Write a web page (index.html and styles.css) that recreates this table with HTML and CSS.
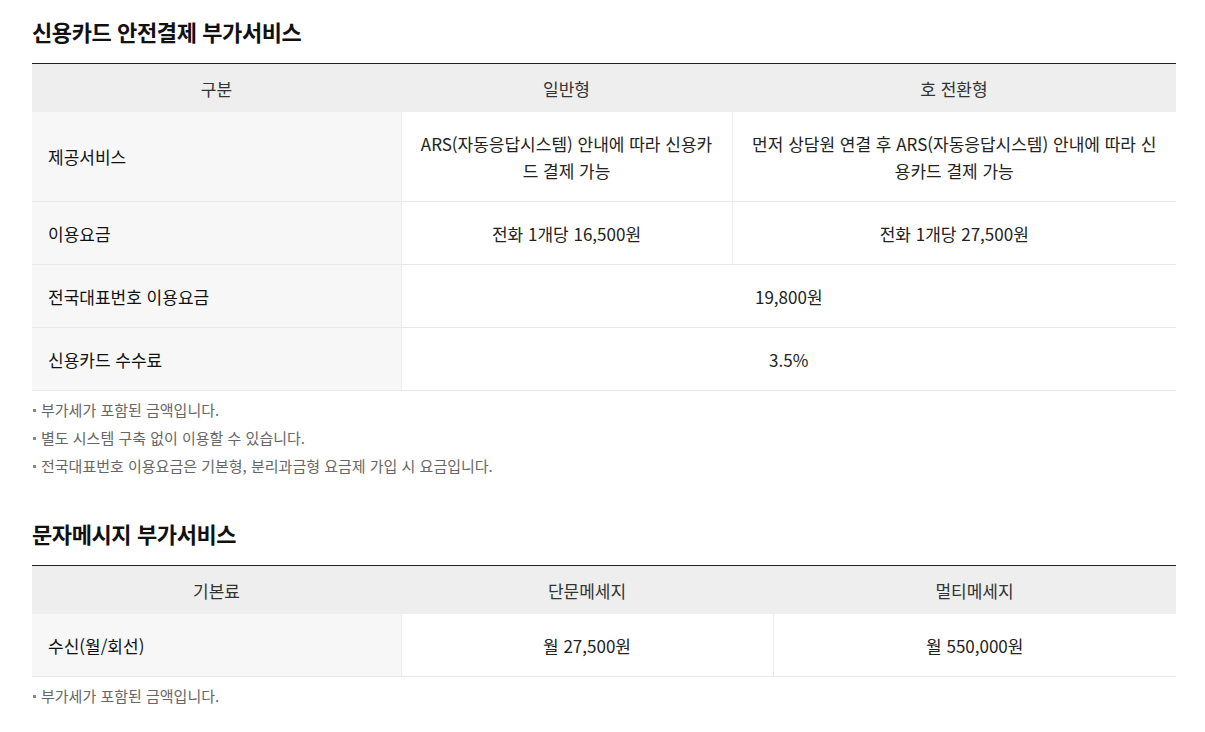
FILE: index.html
```html
<!DOCTYPE html>
<html lang="ko">
<head>
<meta charset="utf-8">
<link rel="stylesheet" href="styles.css">
</head>
<body>
<div class="page">
  <section class="block">
    <h2 class="title">신용카드 안전결제 부가서비스</h2>
    <table class="tbl">
      <colgroup>
        <col class="c-head">
        <col class="c1a">
        <col class="c1b">
      </colgroup>
      <thead>
        <tr><th>구분</th><th>일반형</th><th>호 전환형</th></tr>
      </thead>
      <tbody>
        <tr>
          <th class="rh">제공서비스</th>
          <td>ARS(자동응답시스템) 안내에 따라 신용카<br>드 결제 가능</td>
          <td>먼저 상담원 연결 후 ARS(자동응답시스템) 안내에 따라 신<br>용카드 결제 가능</td>
        </tr>
        <tr>
          <th class="rh">이용요금</th>
          <td>전화 1개당 16,500원</td>
          <td>전화 1개당 27,500원</td>
        </tr>
        <tr>
          <th class="rh">전국대표번호 이용요금</th>
          <td colspan="2">19,800원</td>
        </tr>
        <tr>
          <th class="rh">신용카드 수수료</th>
          <td colspan="2">3.5%</td>
        </tr>
      </tbody>
    </table>
    <ul class="notes">
      <li>부가세가 포함된 금액입니다.</li>
      <li>별도 시스템 구축 없이 이용할 수 있습니다.</li>
      <li>전국대표번호 이용요금은 기본형, 분리과금형 요금제 가입 시 요금입니다.</li>
    </ul>
  </section>
  <section class="block block2">
    <h2 class="title">문자메시지 부가서비스</h2>
    <table class="tbl">
      <colgroup>
        <col class="c-head">
        <col class="c2a">
        <col class="c2b">
      </colgroup>
      <thead>
        <tr><th>기본료</th><th>단문메세지</th><th>멀티메세지</th></tr>
      </thead>
      <tbody>
        <tr>
          <th class="rh">수신(월/회선)</th>
          <td>월 27,500원</td>
          <td>월 550,000원</td>
        </tr>
      </tbody>
    </table>
    <ul class="notes">
      <li>부가세가 포함된 금액입니다.</li>
    </ul>
  </section>
</div>
</body>
</html>
```

FILE: styles.css
```css
* { box-sizing: border-box; }
html, body { margin: 0; padding: 0; background: #fff; }
body {
  font-family: "Noto Sans CJK KR", "Noto Sans", sans-serif;
  color: #222;
}
.page {
  width: 1144px;
  margin-left: 32px;
  padding-top: 16px;
}
.title {
  margin: 0 0 17px;
  font-size: 22px;
  line-height: 30px;
  font-weight: 700;
  color: #111;
  letter-spacing: -0.4px;
}
.block2 { margin-top: 38px; }
.tbl {
  width: 100%;
  border-collapse: collapse;
  table-layout: fixed;
  border-top: 1px solid #222;
  font-size: 17px;
}
.c-head { width: 369px; }
.c1a { width: 331px; }
.c1b { width: 444px; }
.c2a { width: 372px; }
.c2b { width: 403px; }
.tbl thead th {
  background: #eeeeee;
  font-weight: 400;
  color: #333;
  line-height: 27px;
  padding: 10.5px 10px;
  text-align: center;
}
.tbl tbody th, .tbl tbody td {
  border-bottom: 1px solid #e8e8e8;
  line-height: 27px;
  padding: 17.5px 16px;
  vertical-align: middle;
}
.tbl tbody td {
  text-align: center;
  border-left: 1px solid #ececec;
  color: #222;
}
.tbl tbody th.rh {
  background: #f7f7f7;
  text-align: left;
  font-weight: 400;
  color: #111;
}
.notes {
  list-style: none;
  margin: 5px 0 0;
  padding: 0;
  font-size: 15px;
  line-height: 28px;
  color: #666;
}
.notes li {
  position: relative;
  padding-left: 9px;
}
.notes li::before {
  content: "";
  position: absolute;
  left: 1px;
  top: 13px;
  width: 3px;
  height: 3px;
  background: #888;
}
```
